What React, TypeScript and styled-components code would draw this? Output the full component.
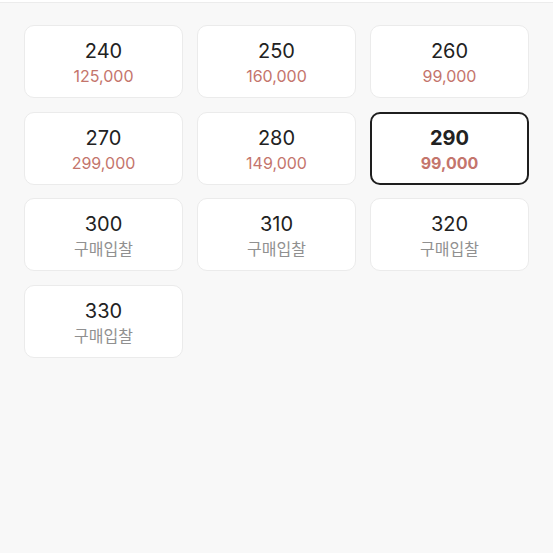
import styled, { createGlobalStyle } from "styled-components";

interface SizeOption {
  size: number;
  price: number | null;
}

const sizes: SizeOption[] = [
  { size: 240, price: 125000 },
  { size: 250, price: 160000 },
  { size: 260, price: 99000 },
  { size: 270, price: 299000 },
  { size: 280, price: 149000 },
  { size: 290, price: 99000 },
  { size: 300, price: null },
  { size: 310, price: null },
  { size: 320, price: null },
  { size: 330, price: null },
];

const selectedSize = 290;

const GlobalStyle = createGlobalStyle`
  html, body {
    margin: 0;
    background: #f8f8f8;
  }
  body {
    font-family: Inter, "Noto Sans CJK KR", sans-serif;
    color: #222;
  }
`;

const App = () => (
  <>
    <GlobalStyle />
    <Page>
      <Grid>
        {sizes.map((item) => {
          const active = item.size === selectedSize;
          return (
            <SizeCard key={item.size} $active={active}>
              <SizeLabel $active={active}>{item.size}</SizeLabel>
              {item.price !== null ? (
                <Price $active={active}>{item.price.toLocaleString("en-US")}</Price>
              ) : (
                <Bid>구매입찰</Bid>
              )}
            </SizeCard>
          );
        })}
      </Grid>
    </Page>
  </>
);

const Page = styled.div`
  min-height: 553px;
  border-top: 2px solid #ffffff;
  box-shadow: inset 0 1px 0 #ececec;
  padding: 23px 24px;
  box-sizing: border-box;
`;

const Grid = styled.div`
  display: grid;
  grid-template-columns: repeat(3, 1fr);
  column-gap: 14px;
  row-gap: 13.7px;
`;

const SizeCard = styled.button<{ $active: boolean }>`
  height: 73px;
  box-sizing: border-box;
  display: flex;
  flex-direction: column;
  align-items: center;
  justify-content: center;
  gap: 0;
  background: #ffffff;
  border-radius: 10px;
  border: ${({ $active }) => ($active ? "2px solid #1e1e1e" : "1px solid #ebebeb")};
  padding: 2px 0 0;
  font-family: inherit;
  cursor: pointer;
`;

const SizeLabel = styled.span<{ $active: boolean }>`
  font-size: 20px;
  line-height: 27px;
  font-weight: ${({ $active }) => ($active ? 700 : 400)};
  color: #222;
`;

const Price = styled.span<{ $active: boolean }>`
  font-size: 16px;
  line-height: 22px;
  font-weight: ${({ $active }) => ($active ? 700 : 400)};
  color: #c4756c;
`;

const Bid = styled.span`
  font-size: 16px;
  line-height: 22px;
  color: #909090;
`;

export default App;
